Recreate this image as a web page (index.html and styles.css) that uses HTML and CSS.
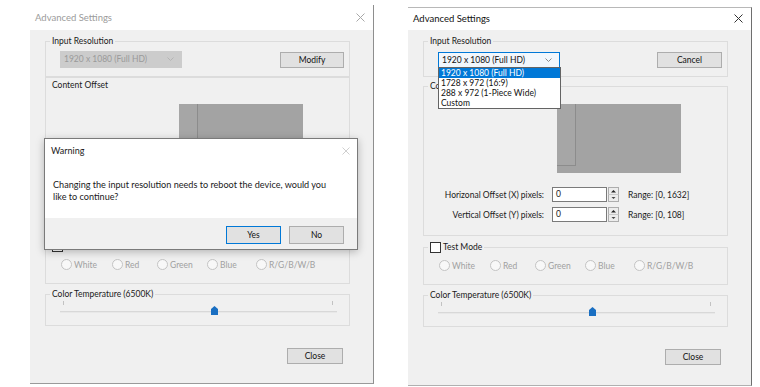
FILE: index.html
```html
<!DOCTYPE html>
<html>
<head>
<meta charset="utf-8">
<link rel="stylesheet" href="styles.css">
</head>
<body>
<div class="desk">
  <div class="win win-l">
    <div class="tbar">
      <span class="ttl">Advanced Settings</span>
      <svg class="xicon" width="9" height="9" viewBox="0 0 9 9"><path d="M0.5 0.5L8.5 8.5M8.5 0.5L0.5 8.5" stroke="currentColor" stroke-width="1" fill="none"/></svg>
    </div>
    <div class="client">
      <fieldset class="grp g-res">
        <legend>Input Resolution</legend>
        <div class="res-row">
          <div class="combo combo-dis"><span>1920 x 1080 (Full HD)</span><svg width="7" height="4" viewBox="0 0 7 4"><path d="M0.5 0.5L3.5 3.5L6.5 0.5" stroke="currentColor" fill="none"/></svg></div>
          <div class="btn btn-mod">Modify</div>
        </div>
      </fieldset>
      <fieldset class="grp g-off g-off-flat">
        <div class="flat-label">Content Offset</div>
        <div class="screen"><div class="piece"></div></div>
        <div class="off-row">
          <span class="off-lbl">Horizonal Offset (X) pixels:</span>
          <span class="num">0</span>
          <svg class="spin" width="11" height="15" viewBox="0 0 11 15"><rect x="0.5" y="0.5" width="10" height="14" fill="#ececec" stroke="#adadad"/><line x1="0.5" y1="7.5" x2="10.5" y2="7.5" stroke="#c8c8c8"/><path d="M3 5.5L5.5 3L8 5.5Z" fill="#222"/><path d="M3.5 10L7.5 10L5.5 12Z" fill="#444"/></svg>
          <span class="range">Range: [0, 1632]</span>
        </div>
        <div class="off-row">
          <span class="off-lbl">Vertical Offset (Y) pixels:</span>
          <span class="num">0</span>
          <svg class="spin" width="11" height="15" viewBox="0 0 11 15"><rect x="0.5" y="0.5" width="10" height="14" fill="#ececec" stroke="#adadad"/><line x1="0.5" y1="7.5" x2="10.5" y2="7.5" stroke="#c8c8c8"/><path d="M3 5.5L5.5 3L8 5.5Z" fill="#222"/><path d="M3.5 10L7.5 10L5.5 12Z" fill="#444"/></svg>
          <span class="range">Range: [0, 108]</span>
        </div>
      </fieldset>
      <fieldset class="grp g-test">
        <legend><span class="chk"></span>Test Mode</legend>
        <div class="radios">
          <span class="rad"><i></i>White</span>
          <span class="rad"><i></i>Red</span>
          <span class="rad"><i></i>Green</span>
          <span class="rad"><i></i>Blue</span>
          <span class="rad"><i></i>R/G/B/W/B</span>
        </div>
      </fieldset>
      <fieldset class="grp g-temp">
        <legend>Color Temperature (6500K)</legend>
        <div class="slider">
          <div class="ticks"><b></b><b></b></div>
          <div class="track">
            <svg class="thumb" style="left: calc(55.8% - 3.5px)" width="7" height="9" viewBox="0 0 7 9"><path d="M0 3L3.5 0L7 3L7 9L0 9Z" fill="#1a6fc2"/></svg>
          </div>
        </div>
      </fieldset>
      <div class="foot"><div class="btn btn-close">Close</div></div>
    </div>

    <div class="dialog">
      <div class="dlg-title">
        <span>Warning</span>
        <svg class="dlg-x" width="8" height="8" viewBox="0 0 8 8"><path d="M0.5 0.5L7.5 7.5M7.5 0.5L0.5 7.5" stroke="currentColor" fill="none"/></svg>
      </div>
      <div class="dlg-msg">Changing the input resolution needs to reboot the device, would you<br>like to continue?</div>
      <div class="dlg-foot">
        <div class="btn dbtn dbtn-yes">Yes</div>
        <div class="btn dbtn">No</div>
      </div>
    </div>
  </div>

  <div class="win win-r">
    <div class="tbar">
      <span class="ttl">Advanced Settings</span>
      <svg class="xicon" width="9" height="9" viewBox="0 0 9 9"><path d="M0.5 0.5L8.5 8.5M8.5 0.5L0.5 8.5" stroke="currentColor" stroke-width="1" fill="none"/></svg>
    </div>
    <div class="client">
      <fieldset class="grp g-res">
        <legend>Input Resolution</legend>
        <div class="res-row">
          <div class="combo combo-act"><span>1920 x 1080 (Full HD)</span><svg width="7" height="4" viewBox="0 0 7 4"><path d="M0.5 0.5L3.5 3.5L6.5 0.5" stroke="currentColor" fill="none"/></svg>
            <ul class="dd">
              <li class="sel">1920 x 1080 (Full HD)</li>
              <li>1728 x 972 (16:9)</li>
              <li>288 x 972 (1-Piece Wide)</li>
              <li>Custom</li>
            </ul>
          </div>
          <div class="btn btn-cancel">Cancel</div>
        </div>
      </fieldset>
      <fieldset class="grp g-off">
        <legend>Content Offset</legend>
        <div class="screen"><div class="piece"></div></div>
        <div class="off-row">
          <span class="off-lbl">Horizonal Offset (X) pixels:</span>
          <span class="num">0</span>
          <svg class="spin" width="11" height="15" viewBox="0 0 11 15"><rect x="0.5" y="0.5" width="10" height="14" fill="#ececec" stroke="#adadad"/><line x1="0.5" y1="7.5" x2="10.5" y2="7.5" stroke="#c8c8c8"/><path d="M3 5.5L5.5 3L8 5.5Z" fill="#222"/><path d="M3.5 10L7.5 10L5.5 12Z" fill="#444"/></svg>
          <span class="range">Range: [0, 1632]</span>
        </div>
        <div class="off-row">
          <span class="off-lbl">Vertical Offset (Y) pixels:</span>
          <span class="num">0</span>
          <svg class="spin" width="11" height="15" viewBox="0 0 11 15"><rect x="0.5" y="0.5" width="10" height="14" fill="#ececec" stroke="#adadad"/><line x1="0.5" y1="7.5" x2="10.5" y2="7.5" stroke="#c8c8c8"/><path d="M3 5.5L5.5 3L8 5.5Z" fill="#222"/><path d="M3.5 10L7.5 10L5.5 12Z" fill="#444"/></svg>
          <span class="range">Range: [0, 108]</span>
        </div>
      </fieldset>
      <fieldset class="grp g-test">
        <legend><span class="chk"></span>Test Mode</legend>
        <div class="radios">
          <span class="rad"><i></i>White</span>
          <span class="rad"><i></i>Red</span>
          <span class="rad"><i></i>Green</span>
          <span class="rad"><i></i>Blue</span>
          <span class="rad"><i></i>R/G/B/W/B</span>
        </div>
      </fieldset>
      <fieldset class="grp g-temp">
        <legend>Color Temperature (6500K)</legend>
        <div class="slider">
          <div class="ticks"><b></b><b></b></div>
          <div class="track">
            <svg class="thumb" style="left: calc(55.8% - 3.5px)" width="7" height="9" viewBox="0 0 7 9"><path d="M0 3L3.5 0L7 3L7 9L0 9Z" fill="#1a6fc2"/></svg>
          </div>
        </div>
      </fieldset>
      <div class="foot"><div class="btn btn-close">Close</div></div>
    </div>
  </div>
</div>
</body>
</html>
```

FILE: styles.css
```css
* { box-sizing: border-box; }

body {
  margin: 0;
  background: #ffffff;
  font-family: Lato, "Noto Sans", sans-serif;
  font-size: 8.5px;
  color: #1a1a1a;
}

.desk {
  display: flex;
  align-items: flex-start;
  height: 387px;
}

.win {
  position: relative;
  width: 344px;
  height: 379px;
  display: flex;
  flex-direction: column;
  background: #ffffff;
}

.win-l {
  margin: 5px 0 0 30px;
  border-right: 1px solid #8e8e8e;
  border-bottom: 1px solid #9a9a9a;
}

.win-r {
  margin: 7px 0 0 34px;
  border-top: 1px solid #b8b8b8;
  border-right: 1px solid #6e6e6e;
  border-bottom: 1px solid #b0b0b0;
}

.tbar {
  display: flex;
  align-items: center;
  justify-content: space-between;
  padding: 0 8px 0 5px;
  font-size: 9.5px;
}

.win-l .tbar { height: 25px; color: #9b9b9b; }
.win-r .tbar { height: 22px; padding-bottom: 2px; color: #111111; }

.xicon { display: block; }
.win-l .xicon { color: #a8a8a8; }
.win-r .xicon { color: #333333; }

.client {
  flex: 1;
  background: #f0f0f0;
  padding: 5px 23px 0 15px;
  display: flex;
  flex-direction: column;
}

.grp {
  margin: 0;
  padding: 0;
  min-width: 0;
  border: 1px solid #dcdcdc;
}

.grp legend {
  margin-left: 4px;
  padding: 0 2px;
  line-height: 12px;
  height: 12px;
  color: #1a1a1a;
}

/* Input resolution */
.g-res { padding: 3px 0 8px 0; }

.res-row {
  height: 18px;
  margin: 0 5px 0 14px;
  display: flex;
  align-items: center;
  justify-content: space-between;
}

.combo {
  position: relative;
  width: 122px;
  height: 17px;
  display: flex;
  align-items: center;
  justify-content: space-between;
  padding: 0 7px 0 3px;
}

.combo svg { display: block; }

.combo-dis {
  background: #cccccc;
  border: 1px solid #cccccc;
  color: #9a9a9a;
}
.combo-dis svg { color: #b4b4b4; }

.combo-act {
  height: 16px;
  margin-top: 1px;
  background: #f2f7fc;
  border: 1px solid #0078d7;
  color: #111111;
}
.combo-act svg { color: #8a8a8a; }

.dd {
  position: absolute;
  top: 100%;
  left: -1px;
  width: 123px;
  margin: 0;
  padding: 0;
  list-style: none;
  background: #ffffff;
  border: 1px solid #646464;
  z-index: 5;
}

.dd li {
  height: 10px;
  line-height: 10px;
  padding-left: 2px;
  color: #111111;
}

.dd li.sel { background: #0078d7; color: #ffffff; }

.btn {
  display: flex;
  align-items: center;
  justify-content: center;
  height: 16px;
  background: #e1e1e1;
  border: 1px solid #adadad;
  color: #111111;
}

.btn-mod { width: 64px; margin-top: 2px; }
.btn-cancel { width: 65px; margin-top: 2px; }
.btn-close { width: 56px; }

/* Content offset */
.g-off { margin-top: 3px; padding: 0 0 13px 0; }
.g-off-flat { margin-top: 0; padding-bottom: 12px; }

.flat-label {
  margin: 1px 0 0 6px;
  line-height: 12px;
}

.screen {
  margin: 12px 0 0 133px;
  width: 124px;
  height: 69px;
  background: #a3a3a3;
}

.g-off-flat .screen { margin-top: 13px; }

.piece {
  width: 19px;
  height: 62px;
  background: #a6a6a6;
  border-right: 1px solid #8c8c8c;
  border-bottom: 1px solid #8c8c8c;
}

.off-row {
  display: flex;
  align-items: center;
  height: 15px;
  margin-top: 5px;
}

.screen + .off-row { margin-top: 14px; }

.off-lbl {
  width: 120px;
  text-align: right;
  margin-right: 8px;
}

.num {
  width: 55px;
  height: 15px;
  background: #ffffff;
  border: 1px solid #7a7a7a;
  padding-left: 3px;
  line-height: 13px;
}

.spin { display: block; margin-left: 1px; }

.range { margin-left: 9px; }

/* Test mode */
.g-test { margin-top: 5px; padding: 7px 0 13px 0; }

.g-test legend {
  display: flex;
  align-items: center;
}

.chk {
  width: 11px;
  height: 11px;
  border: 1px solid #333333;
  background: #ffffff;
  margin-right: 2px;
}

.radios {
  margin-left: 15px;
  display: grid;
  grid-template-columns: 51px 45px 50px 49px auto;
  height: 11px;
}

.rad {
  display: flex;
  align-items: center;
  color: #a0a0a0;
}

.rad i {
  width: 11px;
  height: 11px;
  border-radius: 50%;
  border: 1px solid #c4c4c4;
  background: #f8f8f8;
  margin-right: 2px;
}

/* Color temperature */
.g-temp { margin-top: 4px; padding: 1px 0 6px 0; }

.slider { height: 18px; margin: 0 12px 0 14px; }

.ticks {
  display: flex;
  justify-content: space-between;
  padding: 0 4px 0 3px;
  height: 5px;
}

.ticks b {
  width: 1px;
  height: 4px;
  background: #c2c2c2;
}

.track {
  position: relative;
  margin-top: 5px;
  height: 2px;
  background: #d8d8d8;
  border-bottom: 1px solid #e8e8e8;
}

.thumb {
  position: absolute;
  top: -5px;
  display: block;
}

.foot {
  margin-top: 22px;
  display: flex;
  justify-content: flex-end;
  padding-right: 7px;
}

/* Warning dialog */
.dialog {
  position: absolute;
  left: 14px;
  top: 133px;
  width: 314px;
  height: 112px;
  background: #ffffff;
  border: 1px solid #7a7a7a;
  box-shadow: 0 2px 8px rgba(0, 0, 0, 0.25);
  display: flex;
  flex-direction: column;
  z-index: 10;
}

.dlg-title {
  display: flex;
  justify-content: space-between;
  align-items: center;
  padding: 6px 7px 0 6px;
  line-height: 12px;
  font-size: 9px;
}

.dlg-x { display: block; color: #cfcfcf; }

.dlg-msg {
  margin-top: 22px;
  padding-left: 8px;
  line-height: 12px;
  font-size: 9.1px;
  white-space: nowrap;
}

.dlg-foot {
  margin-top: auto;
  height: 31px;
  background: #f0f0f0;
  display: flex;
  justify-content: flex-end;
  gap: 8px;
  padding: 8px 13px 0 0;
}

.dbtn { width: 55px; height: 18px; }
.dbtn-yes { border-color: #0078d7; }
```
